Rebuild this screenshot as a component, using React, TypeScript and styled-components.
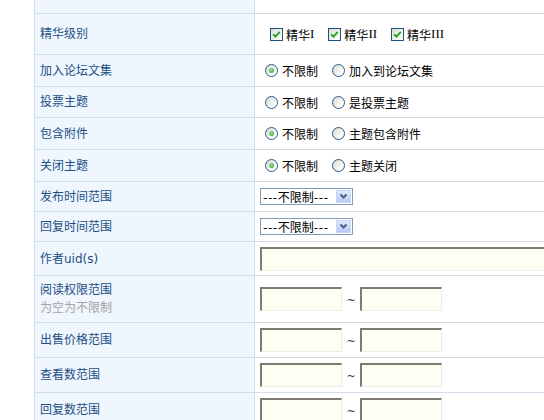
import React from 'react'
import styled, { createGlobalStyle } from 'styled-components'

const Global = createGlobalStyle`
  html, body {
    margin: 0;
    padding: 0;
    background: #fff;
    overflow: hidden;
  }
  body {
    font-family: "DejaVu Sans", "Noto Sans CJK SC", sans-serif;
    font-size: 12px;
  }
`;

const Page = styled.div`
  padding-left: 34px;
  width: 544px;
  box-sizing: border-box;
  overflow: hidden;
`;

const Table = styled.div`
  border-left: 1px solid #d3dde9;
`;

const Row = styled.div<{ h: number }>`
  display: grid;
  grid-template-columns: 220px 1fr;
  height: ${p => p.h}px;
  box-sizing: border-box;
  border-bottom: 1px solid #d3dde9;
`;

const Label = styled.div`
  background: #f0f6fd;
  border-right: 1px solid #d3dde9;
  color: #1b4f86;
  padding-left: 5px;
  display: flex;
  flex-direction: column;
  justify-content: center;
  line-height: 18px;
`;

const Hint = styled.span`
  color: #a3a3a3;
`;

const Cell = styled.div<{ pad?: number }>`
  display: flex;
  align-items: center;
  padding-left: ${p => p.pad ?? 5}px;
  color: #000;
  white-space: nowrap;
  overflow: hidden;
`;

const Option = styled.label`
  display: inline-flex;
  align-items: center;
  margin-right: 14px;
`;

const Box = styled.span`
  width: 11px;
  height: 11px;
  border: 1px solid #1c5180;
  background: linear-gradient(135deg, #dcdcd6, #ffffff);
  margin-right: 3px;
  display: inline-flex;
  align-items: center;
  justify-content: center;
`;

const Round = styled.span<{ on?: boolean }>`
  width: 11px;
  height: 11px;
  border-radius: 50%;
  border: 1px solid #2c5a86;
  background: linear-gradient(135deg, #d9d9d2, #ffffff 80%);
  margin-right: 4px;
  display: inline-flex;
  align-items: center;
  justify-content: center;
  &::after {
    content: '';
    width: 5px;
    height: 5px;
    border-radius: 50%;
    background: ${p => (p.on ? 'radial-gradient(circle at 40% 40%, #9be29b, #23a023)' : 'transparent')};
  }
`;

const Roman = styled.span`
  font-family: "Liberation Serif", serif;
  font-size: 13px;
`;

const Select = styled.div`
  width: 93px;
  height: 17px;
  box-sizing: border-box;
  border: 1px solid #7f9db9;
  background: #fff;
  display: flex;
  align-items: center;
  justify-content: space-between;
  padding: 0 1px 0 2px;
`;

const Dash = styled.span`
  letter-spacing: 0.6px;
`;

const Arrow = styled.span`
  width: 15px;
  height: 13px;
  background: linear-gradient(180deg, #dfe8fd, #b7cbf7);
  border: 1px solid #c6d5f8;
  box-sizing: border-box;
  display: flex;
  align-items: center;
  justify-content: center;
`;

const Input = styled.div<{ w: number }>`
  width: ${p => p.w}px;
  height: 24px;
  box-sizing: border-box;
  background: #fefef3;
  border-top: 2px solid #7c7c70;
  border-left: 2px solid #7c7c70;
  border-right: 1px solid #ecece4;
  border-bottom: 1px solid #ecece4;
  flex-shrink: 0;
`;

const Tilde = styled.span`
  width: 18px;
  text-align: center;
  font-size: 11px;
  color: #333;
  padding-top: 3px;
`;

function Check({ text, roman }: { text: string; roman: string }) {
  return (
    <Option>
      <Box>
        <svg width="9" height="9" viewBox="0 0 9 9">
          <path d="M1.2 4.3 L3.4 6.6 L7.8 1.8" fill="none" stroke="#21a121" strokeWidth="1.8" />
        </svg>
      </Box>
      {text}
      <Roman>{roman}</Roman>
    </Option>
  )
}

function Radio({ on, text }: { on?: boolean; text: string }) {
  return (
    <Option>
      <Round on={on} />
      {text}
    </Option>
  )
}

function Pick() {
  return (
    <Select>
      <span>
        <Dash>---</Dash>不限制<Dash>---</Dash>
      </span>
      <Arrow>
        <svg width="9" height="7" viewBox="0 0 9 7">
          <path d="M1.5 1.5 L4.5 4.5 L7.5 1.5" fill="none" stroke="#4d6185" strokeWidth="2" />
        </svg>
      </Arrow>
    </Select>
  )
}

function Range() {
  return (
    <Cell>
      <Input w={82} />
      <Tilde>~</Tilde>
      <Input w={82} />
    </Cell>
  )
}

export default function App() {
  return (
    <>
      <Global />
      <Page>
        <Table>
          <Row h={14}>
            <Label />
            <Cell />
          </Row>
          <Row h={41}>
            <Label>精华级别</Label>
            <Cell pad={15}>
              <Check text="精华" roman="I" />
              <Check text="精华" roman="II" />
              <Check text="精华" roman="III" />
            </Cell>
          </Row>
          <Row h={32}>
            <Label>加入论坛文集</Label>
            <Cell pad={10}>
              <Radio on text="不限制" />
              <Radio text="加入到论坛文集" />
            </Cell>
          </Row>
          <Row h={31}>
            <Label>投票主题</Label>
            <Cell pad={10}>
              <Radio text="不限制" />
              <Radio text="是投票主题" />
            </Cell>
          </Row>
          <Row h={32}>
            <Label>包含附件</Label>
            <Cell pad={10}>
              <Radio on text="不限制" />
              <Radio text="主题包含附件" />
            </Cell>
          </Row>
          <Row h={32}>
            <Label>关闭主题</Label>
            <Cell pad={10}>
              <Radio on text="不限制" />
              <Radio text="主题关闭" />
            </Cell>
          </Row>
          <Row h={30}>
            <Label>发布时间范围</Label>
            <Cell>
              <Pick />
            </Cell>
          </Row>
          <Row h={30}>
            <Label>回复时间范围</Label>
            <Cell>
              <Pick />
            </Cell>
          </Row>
          <Row h={34}>
            <Label>作者uid(s)</Label>
            <Cell>
              <Input w={320} />
            </Cell>
          </Row>
          <Row h={47}>
            <Label>
              <span>阅读权限范围</span>
              <Hint>为空为不限制</Hint>
            </Label>
            <Range />
          </Row>
          <Row h={35}>
            <Label>出售价格范围</Label>
            <Range />
          </Row>
          <Row h={35}>
            <Label>查看数范围</Label>
            <Range />
          </Row>
          <Row h={35}>
            <Label>回复数范围</Label>
            <Range />
          </Row>
        </Table>
      </Page>
    </>
  )
}
